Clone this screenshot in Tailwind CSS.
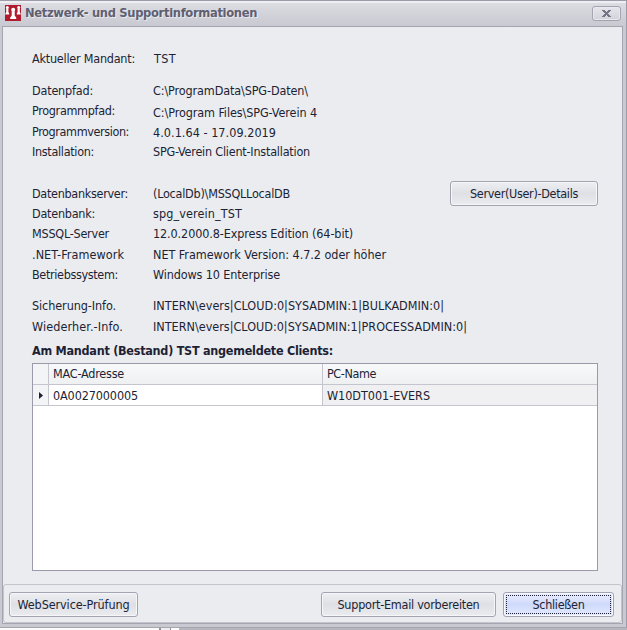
<!DOCTYPE html>
<html lang="de">
<head>
<meta charset="utf-8">
<title>Netzwerk- und Supportinformationen</title>
<script src="https://cdn.jsdelivr.net/npm/@tailwindcss/browser@4"></script>
</head>
<body class="w-[627px] h-[630px] overflow-hidden bg-[#e6e7ea] font-['DejaVu_Sans_Condensed','DejaVu_Sans',sans-serif] text-[12.5px] leading-[20px] text-[#201f35] whitespace-nowrap">
<div class="flex flex-col w-[627px] h-[628px] bg-[#c8c9d1] border-t border-r border-b border-[#9c9ba9] border-b-[#a5a5b0]">
  <header class="flex items-center h-[25px] pl-[5px] pr-[5px] pb-[3px] border-t-2 border-t-[#efeff3] bg-linear-to-b from-[#dcdce2] to-[#c8c9d1]">
    <svg class="w-4 h-4 shrink-0" viewBox="0 0 16 16">
      <rect width="16" height="16" fill="#b01c2e"/>
      <g fill="#fff">
        <circle cx="2.300" cy="2.500" r="1.500"/><path d="M1.200 3.700h2.200v3.200l.8 1.500v1H.4v-1l.8-1.500z"/>
        <circle cx="13.700" cy="2.500" r="1.500"/><path d="M12.600 3.700h2.200v3.200l.8 1.500v1h-3.800v-1l.8-1.500z"/>
        <circle cx="8.200" cy="4.800" r="2"/><path d="M6.700 6.200h3v4.200l1.500 2v1.500H5.200v-1.500l1.500-2z"/>
      </g>
    </svg>
    <h1 class="ml-1 flex-1 font-bold text-[#5f5f71] text-[12.8px] [text-shadow:1px_1px_0_#e9e9ee]"><span data-w="232">Netzwerk- und Supportinformationen</span></h1>
    <button class="flex items-center justify-center w-[29px] h-[15px] mt-px rounded-[3px] border border-[#a3a4b2] bg-linear-to-b from-[#e6e6eb] to-[#d2d3da] shadow-[inset_0_0_0_1px_#e8e8ee]" aria-label="Schließen">
      <svg class="w-[9px] h-[7px]" viewBox="0 0 9 7" shape-rendering="crispEdges"><path fill="#747687" d="M0 0h3v1h1v1h1V1h1V0h3v1H8v1H7v1H6v1h1v1h1v1h1v1H6V6H5V5H4v1H3v1H0V6h1V5h1V4h1V3H2V2H1V1H0z"/></svg>
    </button>
  </header>
  <div class="flex flex-col flex-1 min-h-0 ml-[2px] mr-[3px] mb-[3px] border border-[#a5a5b0] bg-[#ebecef]">
    <main class="flex-1 pl-[29px] pr-[24px] pt-[22px]">
      <dl>
        <div class="flex h-5 mb-3"><dt class="w-[122px]"><span data-w="103">Aktueller Mandant:</span></dt><dd><span data-w="22">TST</span></dd></div>
        <div class="flex h-5"><dt class="w-[121px]"><span data-w="61">Datenpfad:</span></dt><dd><span data-w="155">C:\ProgramData\SPG-Daten\</span></dd></div>
        <div class="flex h-[21px]"><dt class="w-[121px]"><span data-w="83">Programmpfad:</span></dt><dd class="pt-[2px]"><span data-w="164">C:\Program Files\SPG-Verein 4</span></dd></div>
        <div class="flex h-5"><dt class="w-[121px]"><span data-w="97">Programmversion:</span></dt><dd class="pt-px"><span data-w="123">4.0.1.64 - 17.09.2019</span></dd></div>
        <div class="flex h-5 mb-[22px]"><dt class="w-[121px]"><span data-w="62">Installation:</span></dt><dd><span data-w="157">SPG-Verein Client-Installation</span></dd></div>
        <div class="flex h-5"><dt class="w-[121px]"><span data-w="96">Datenbankserver:</span></dt><dd class="flex-1"><span data-w="137">(LocalDb)\MSSQLLocalDB</span></dd>
          <button class="flex items-center justify-center w-[148px] h-[25px] -mt-[3px] rounded-[3px] border border-[#a3a4b2] bg-linear-to-b from-[#eeeff2] via-[#dfe0e5] to-[#ebecef] shadow-[inset_0_0_0_1px_#f6f6f8]"><span data-w="108">Server(User)-Details</span></button></div>
        <div class="flex h-5"><dt class="w-[121px]"><span data-w="63">Datenbank:</span></dt><dd><span data-w="89">spg_verein_TST</span></dd></div>
        <div class="flex h-[21px]"><dt class="w-[121px]"><span data-w="77">MSSQL-Server</span></dt><dd><span data-w="200">12.0.2000.8-Express Edition (64-bit)</span></dd></div>
        <div class="flex h-5"><dt class="w-[121px]"><span data-w="92">.NET-Framework</span></dt><dd><span data-w="233">NET Framework Version: 4.7.2 oder höher</span></dd></div>
        <div class="flex h-5 mb-[11px]"><dt class="w-[121px]"><span data-w="86">Betriebssystem:</span></dt><dd><span data-w="127">Windows 10 Enterprise</span></dd></div>
        <div class="flex h-[21px]"><dt class="w-[121px]"><span data-w="84">Sicherung-Info.</span></dt><dd><span data-w="291">INTERN\evers|CLOUD:0|SYSADMIN:1|BULKADMIN:0|</span></dd></div>
        <div class="flex h-6"><dt class="w-[121px]"><span data-w="91">Wiederher.-Info.</span></dt><dd><span data-w="314">INTERN\evers|CLOUD:0|SYSADMIN:1|PROCESSADMIN:0|</span></dd></div>
      </dl>
      <h2 class="h-[22px] font-bold"><span data-w="301">Am Mandant (Bestand) TST angemeldete Clients:</span></h2>
      <div class="w-[566px] h-[208px] border border-[#9a9aaa] bg-white">
        <div class="grid grid-cols-[16px_274px_274px]">
          <div class="h-[21px] border-r border-b border-[#c5c5d0] bg-[#f3f4f6]"></div>
          <div class="h-[21px] border-r border-b border-[#c5c5d0] bg-linear-to-b from-[#f9f9fa] to-[#eff0f2] pl-1"><span data-w="71">MAC-Adresse</span></div>
          <div class="h-[21px] border-b border-[#c5c5d0] bg-linear-to-b from-[#f9f9fa] to-[#eff0f2] pl-1"><span data-w="49">PC-Name</span></div>
          <div class="flex items-center h-[21px] pl-[6px] border-r border-b border-[#c5c5d0] bg-[#f3f4f6]"><svg class="w-1 h-[7px]" viewBox="0 0 4 7"><path fill="#201f35" d="M0 0l4 3.500L0 7z"/></svg></div>
          <div class="h-[21px] pt-px border-r border-b border-[#c5c5d0] pl-1"><span data-w="85">0A0027000005</span></div>
          <div class="h-[21px] pt-px border-b border-[#c5c5d0] bg-[#f0f0f2] pl-1"><span data-w="103">W10DT001-EVERS</span></div>
        </div>
      </div>
    </main>
    <footer class="flex items-start h-[39px] pt-[7px] pl-[5px] pr-[7px] rounded-[3px] border border-[#c3c4cc]">
      <button class="flex items-center justify-center w-[129px] h-[25px] rounded-[3px] border border-[#a3a4b2] bg-linear-to-b from-[#eeeff2] via-[#dfe0e5] to-[#ebecef] shadow-[inset_0_0_0_1px_#f6f6f8]"><span data-w="112">WebService-Prüfung</span></button>
      <button class="flex items-center justify-center w-[175px] h-[25px] ml-auto mr-[7px] rounded-[3px] border border-[#a3a4b2] bg-linear-to-b from-[#eeeff2] via-[#dfe0e5] to-[#ebecef] shadow-[inset_0_0_0_1px_#f6f6f8]"><span data-w="142">Support-Email vorbereiten</span></button>
      <button class="w-[111px] h-[25px] p-[2px] rounded-[3px] border border-[#a3a4b2] bg-linear-to-b from-[#eaeffe] via-[#cfd9fa] to-[#e4ecff] shadow-[inset_0_0_0_1px_#f6f8ff]"><span class="flex items-center justify-center w-full h-full border border-dotted border-[#201f35]"><span data-w="52">Schließen</span></span></button>
    </footer>
  </div>
</div>
<div class="flex h-[2px] bg-[#f1f1f3]"><i class="w-[159px] bg-[#fbfbfb]"></i><i class="w-[2px] bg-[#92929a]"></i><i class="w-[9px] bg-[#eeeeee]"></i><i class="w-px bg-[#92929a]"></i><i class="w-[8px] bg-white"></i><i class="flex-1 bg-[#b6b6be]"></i></div>
<script>
  // Letter spacing follows from each label's nominal width.
  const ctx = document.createElement('canvas').getContext('2d');
  for (const el of document.querySelectorAll('[data-w]')) {
    const size = el.closest('h1') ? '12.8px' : '12.5px';
    ctx.font = (el.closest('h1,h2') ? 'bold ' : '') + size + ' "DejaVu Sans Condensed"';
    const gap = (el.dataset.w - ctx.measureText(el.textContent).width) / el.textContent.length;
    el.style.letterSpacing = gap.toFixed(3) + 'px';
  }
</script>
</body>
</html>
